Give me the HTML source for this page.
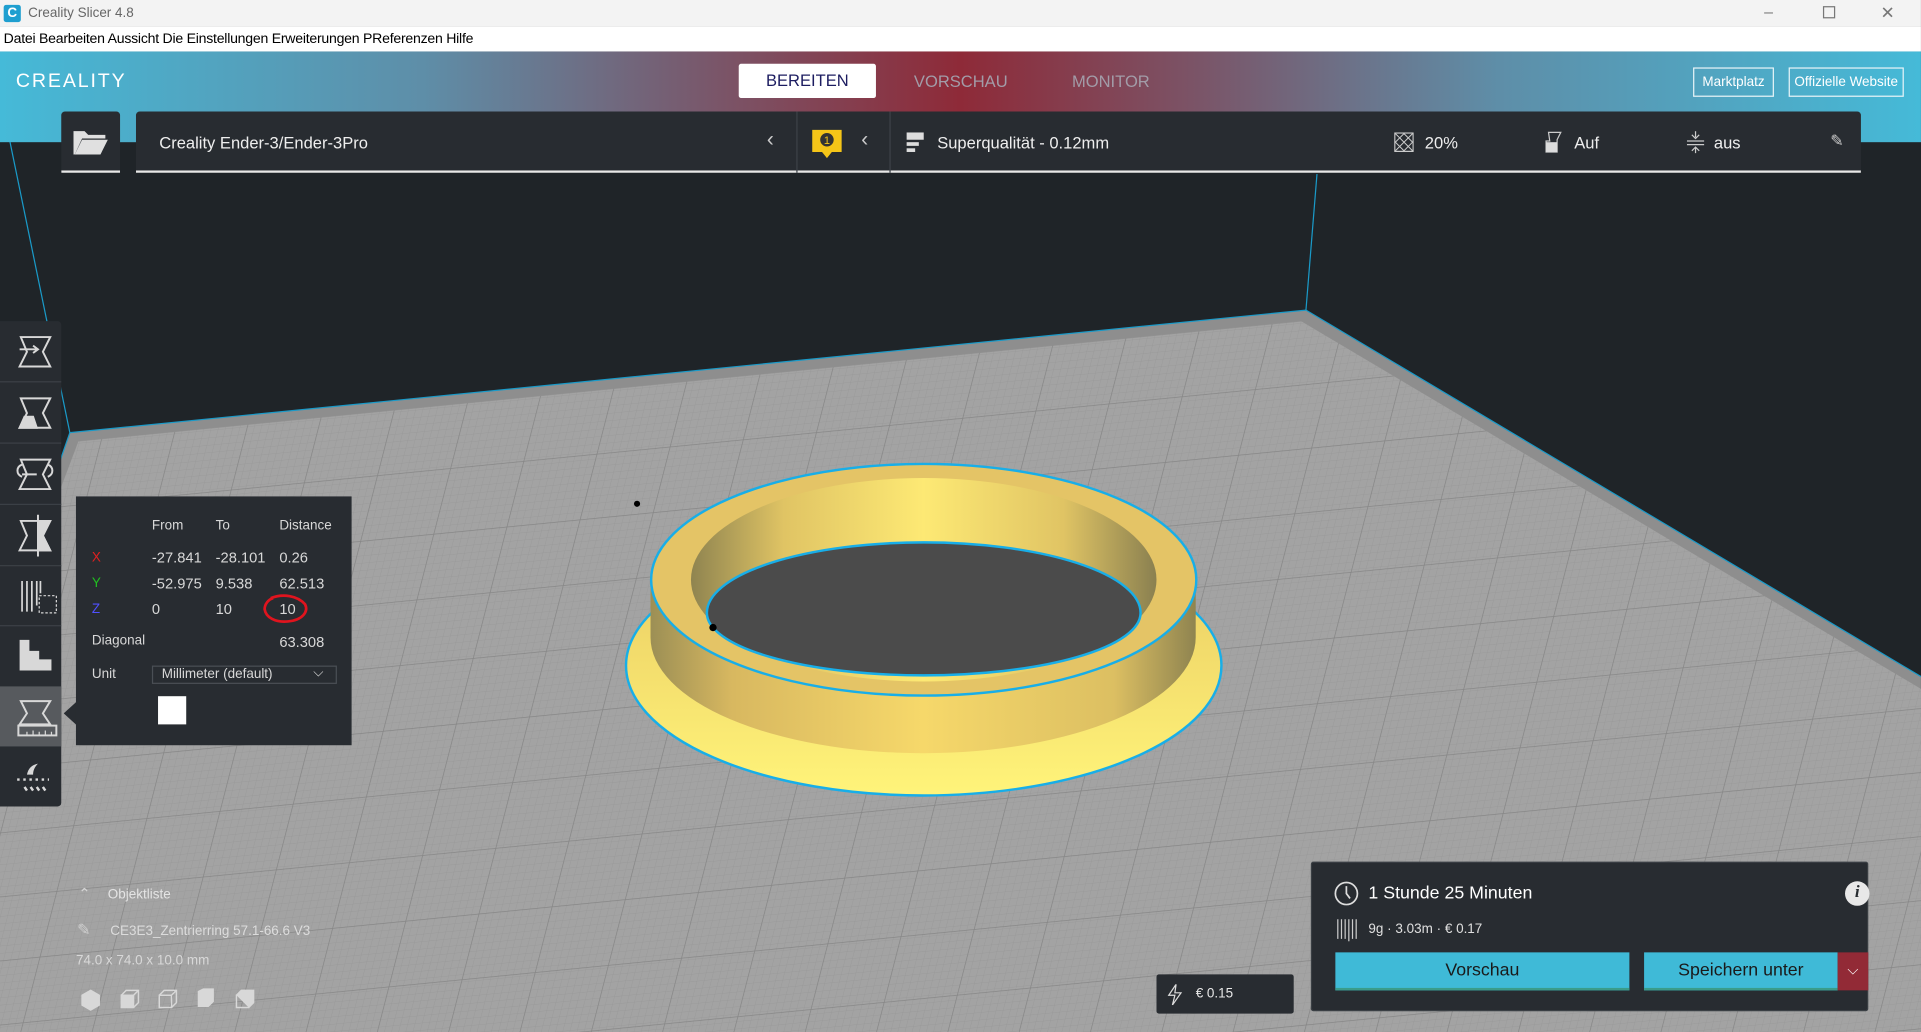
<!DOCTYPE html>
<html><head><meta charset="utf-8"><style>
*{margin:0;padding:0;box-sizing:border-box}
html,body{width:1921px;height:1032px;overflow:hidden;background:#1f2428;font-family:"Liberation Sans",sans-serif}
#stage{position:absolute;left:0;top:0;width:1568px;height:842px;transform-origin:0 0;transform:scale(1.2251,1.2257);background:#1f2428;overflow:hidden}
.abs{position:absolute}
.tb{background:#282c31}
.w{color:#fff}
</style></head><body><div id="stage">

<svg class="abs" style="left:0;top:0" width="1568" height="842" viewBox="0 0 1568 842">
<defs>
<pattern id="minor" width="6" height="6" patternUnits="userSpaceOnUse" patternTransform="rotate(-5.6) skewX(-20)">
<rect width="6" height="6" fill="#a3a3a3"/><path d="M0 0H6M0 0V6" stroke="#979797" stroke-width="0.6"/>
</pattern>
<pattern id="major" width="60" height="52" patternUnits="userSpaceOnUse" patternTransform="rotate(-5.6) skewX(-20)">
<path d="M0 0H60M0 0V52" stroke="#868686" stroke-width="1.2"/>
</pattern>
<linearGradient id="wall" x1="0" x2="1"><stop offset="0" stop-color="#9c8f55"/><stop offset="0.15" stop-color="#d8b860"/><stop offset="0.5" stop-color="#f6d86a"/><stop offset="0.85" stop-color="#dcbf62"/><stop offset="1" stop-color="#8f8450"/></linearGradient>
<linearGradient id="inwall" x1="0" x2="1"><stop offset="0" stop-color="#8f8450"/><stop offset="0.2" stop-color="#e0c464"/><stop offset="0.5" stop-color="#fde974"/><stop offset="0.8" stop-color="#e0c464"/><stop offset="1" stop-color="#8a8050"/></linearGradient>
<linearGradient id="flange" x1="0" x2="0" y1="0" y2="1"><stop offset="0" stop-color="#e8c860"/><stop offset="1" stop-color="#fff47a"/></linearGradient>
</defs>
<polygon points="57,353 1066,253 1568,552 1568,842 0,842 0,517" fill="#8e8e8e"/>
<polygon points="64,360 1062,262 1568,562 1568,842 0,842 0,530" fill="url(#minor)"/>
<polygon points="64,360 1062,262 1568,562 1568,842 0,842 0,530" fill="url(#major)"/>
<path d="M57,353 L1066,253 L1568,552" fill="none" stroke="#1a9ac8" stroke-width="1"/>
<path d="M57,353 L0,517" stroke="#1a9ac8" stroke-width="1"/>
<path d="M57,353 L8,115" stroke="#1a9ac8" stroke-width="1"/>
<path d="M1066,253 L1075,142" stroke="#1a9ac8" stroke-width="1"/>
<ellipse cx="754" cy="543" rx="243" ry="106" fill="url(#flange)" stroke="#18aee8" stroke-width="2"/>
<path d="M531,473 L531,520 A222.5 94.5 0 0 0 976,520 L976,473 Z" fill="url(#wall)"/>
<ellipse cx="754" cy="473" rx="222.5" ry="94.5" fill="#e4c466" stroke="#18aee8" stroke-width="2"/>
<ellipse cx="754" cy="473" rx="190" ry="83" fill="url(#inwall)"/>
<path d="M577,500 A177 57.5 0 0 1 931,500 A177 51 0 0 1 577,500 Z" fill="#4b4b4b" stroke="#18aee8" stroke-width="2"/>
<circle cx="520" cy="411" r="2.5" fill="#000"/><circle cx="582" cy="512" r="3" fill="#000"/>
</svg>

<div class="abs" style="left:0;top:0;width:1568px;height:22px;background:#f3f3f3"></div>
<div class="abs" style="left:3px;top:4px;width:14px;height:14px;background:#1f9fd0;border-radius:2px;color:#fff;font-size:11px;font-weight:bold;line-height:14px;text-align:center">C</div>
<div class="abs" style="left:23px;top:5px;font-size:11px;color:#666">Creality Slicer 4.8</div>
<div class="abs" style="left:1440px;top:2px;font-size:13px;color:#777">–</div>
<div class="abs" style="left:1488px;top:5px;width:10px;height:10px;border:1px solid #777"></div>
<div class="abs" style="left:1535px;top:2px;font-size:14px;color:#777">✕</div>
<div class="abs" style="left:0;top:22px;width:1568px;height:20px;background:#fff"></div>
<div class="abs" style="left:3px;top:26px;font-size:11.5px;color:#000;letter-spacing:-0.2px">Datei Bearbeiten Aussicht Die Einstellungen Erweiterungen PReferenzen Hilfe</div>
<div class="abs" style="left:0;top:42px;width:1568px;height:74px;background:linear-gradient(90deg,#45bad8 0%,#5e8ea8 22%,#7b5366 38%,#8e2a38 50%,#7b5366 62%,#5e8ea8 78%,#45bad8 100%)"></div>
<div class="abs w" style="left:13px;top:58px;font-size:16px;letter-spacing:1.5px">CREALITY</div>
<div class="abs" style="left:603px;top:52px;width:112px;height:28px;background:#fff;border-radius:2px;color:#1c1c60;font-size:13.5px;text-align:center;line-height:28px">BEREITEN</div>
<div class="abs" style="left:746px;top:59px;font-size:13.5px;color:#a29ca8">VORSCHAU</div>
<div class="abs" style="left:875px;top:59px;font-size:13.5px;color:#a29ca8">MONITOR</div>
<div class="abs w" style="left:1382px;top:55px;width:66px;height:24px;border:1px solid #e8f4f8;font-size:11px;text-align:center;line-height:22px">Marktplatz</div>
<div class="abs w" style="left:1460px;top:55px;width:94px;height:24px;border:1px solid #e8f4f8;font-size:11px;text-align:center;line-height:22px">Offizielle Website</div>
<div class="abs tb" style="left:50px;top:91px;width:48px;height:50px;border-bottom:2px solid #e8e8e8;border-radius:3px 3px 0 0"></div>
<svg class="abs" style="left:59px;top:104px" width="30" height="24"><path d="M1 3h9l3 3h14v3H8L2 22H1z" fill="#e0e0e0"/><path d="M8 10h21l-6 12H2z" fill="#e0e0e0"/></svg>
<div class="abs tb" style="left:111px;top:91px;width:1408px;height:50px;border-bottom:2px solid #e8e8e8;border-radius:3px 3px 0 0"></div>
<div class="abs" style="left:650px;top:91px;width:1px;height:50px;background:#3d4248"></div>
<div class="abs" style="left:726px;top:91px;width:1px;height:50px;background:#3d4248"></div>
<div class="abs w" style="left:130px;top:109px;font-size:13.5px;color:#eee">Creality Ender-3/Ender-3Pro</div>
<div class="abs" style="left:626px;top:104px;font-size:17px;color:#ccc">‹</div>
<svg class="abs" style="left:662px;top:104px" width="26" height="26"><path d="M1 2h24v18H17l-4 5-4-5H1z" fill="#f5c518"/><circle cx="13" cy="10" r="5.5" fill="#333"/><text x="13" y="13.5" font-size="9" fill="#f5c518" text-anchor="middle" font-family="Liberation Sans">1</text></svg>
<div class="abs" style="left:703px;top:104px;font-size:17px;color:#ccc">‹</div>
<svg class="abs" style="left:740px;top:108px" width="16" height="18"><rect x="0" y="0" width="14" height="6" fill="#ddd"/><rect x="0" y="8" width="10" height="3" fill="#ddd"/><rect x="0" y="13" width="7" height="3" fill="#ddd"/></svg>
<div class="abs" style="left:765px;top:109px;font-size:13.5px;color:#eee">Superqualität - 0.12mm</div>
<svg class="abs" style="left:1138px;top:108px" width="16" height="16"><rect x="0.5" y="0.5" width="15" height="15" fill="none" stroke="#ccc"/><path d="M1 1L15 15M15 1L1 15M8 1L1 8L8 15L15 8z" stroke="#ccc" fill="none" stroke-width="0.8"/></svg>
<div class="abs" style="left:1163px;top:109px;font-size:13.5px;color:#eee">20%</div>
<svg class="abs" style="left:1261px;top:107px" width="16" height="18"><path d="M3 1h10l-3 6v10H1V8h3z" fill="none" stroke="#ccc"/><rect x="1" y="9" width="9" height="8" fill="#ddd"/></svg>
<div class="abs" style="left:1285px;top:109px;font-size:13.5px;color:#eee">Auf</div>
<svg class="abs" style="left:1376px;top:107px" width="16" height="18"><path d="M8 0v5M5 3l3 3 3-3M1 8h14M1 11h14M8 18v-5M5 16l3-3 3 3" stroke="#ccc" fill="none"/></svg>
<div class="abs" style="left:1399px;top:109px;font-size:13.5px;color:#eee">aus</div>
<div class="abs" style="left:1494px;top:107px;font-size:13px;color:#ccc">✎</div>

<div class="abs tb" style="left:0;top:262px;width:50px;height:396px;border-radius:0 3px 3px 0"></div>
<div class="abs" style="left:0;top:560px;width:50px;height:49px;background:#575a5e"></div>
<div class="abs" style="left:0;top:311px;width:50px;height:1px;background:#3c4046"></div>
<div class="abs" style="left:0;top:361px;width:50px;height:1px;background:#3c4046"></div>
<div class="abs" style="left:0;top:411px;width:50px;height:1px;background:#3c4046"></div>
<div class="abs" style="left:0;top:461px;width:50px;height:1px;background:#3c4046"></div>
<div class="abs" style="left:0;top:510px;width:50px;height:1px;background:#3c4046"></div>
<svg class="abs" style="left:0;top:262px" width="50" height="396" fill="none" stroke="#d8d8d8" stroke-width="1.6">
<path d="M17 13h24l-6 12 6 12H16l6-12z"/><path d="M16 23h14M27 20l4 3-4 3"/>
<path d="M17 63h24l-6 12 6 12H16l6-12z"/><path d="M16 87l4-9h7l3 9z" fill="#d8d8d8"/>
<path d="M17 113h24l-6 12 6 12H16l6-12z"/><path d="M18 117c-5 2-5 8 0 10M39 117c5 2 5 8 0 10M18 125h12"/>
<path d="M17 163h24l-6 12 6 12H16l6-12z"/><path d="M31 158v34M31 163h10l-6 12 6 12H31z" fill="#d8d8d8"/>
<path d="M18 212v25M22 212v25M26 212v25M30 212v20M33 212v10" stroke-width="1.4"/><rect x="32" y="224" width="14" height="14" stroke-dasharray="2 1.5" stroke-width="1"/>
<path d="M16 260h8v9h8v7h10v9H16z" fill="#d8d8d8" stroke="none"/>
<path d="M17 310h24l-6 10 6 9H16l6-9z"/><rect x="15" y="330" width="31" height="8"/><path d="M22 338v-3M27 338v-4M32 338v-3M37 338v-4M42 338v-3" stroke-width="1"/>
<path d="M22 370c1-5 4-8 9-9-3 3-4 6-4 9z" fill="#d8d8d8" stroke="none"/><path d="M14 374h26" stroke-dasharray="2 3" stroke-width="2"/><path d="M20 380l2 3M25 380l2 3M30 380l2 3M35 380l2 3" stroke-width="2"/>
</svg>
<svg class="abs" style="left:52px;top:572px" width="11" height="20"><path d="M11 0L0 10l11 10z" fill="#282c31"/></svg>
<div class="abs tb" style="left:62px;top:405px;width:225px;height:203px;font-size:11px;color:#d8d8d8">
<div class="abs" style="left:62px;top:18px">From</div><div class="abs" style="left:114px;top:18px">To</div><div class="abs" style="left:166px;top:18px">Distance</div>
<div class="abs" style="left:13px;top:44px;color:#e02020">X</div><div class="abs" style="left:62px;top:43px;font-size:12px">-27.841</div><div class="abs" style="left:114px;top:43px;font-size:12px">-28.101</div><div class="abs" style="left:166px;top:43px;font-size:12px">0.26</div>
<div class="abs" style="left:13px;top:65px;color:#20c020">Y</div><div class="abs" style="left:62px;top:64px;font-size:12px">-52.975</div><div class="abs" style="left:114px;top:64px;font-size:12px">9.538</div><div class="abs" style="left:166px;top:64px;font-size:12px">62.513</div>
<div class="abs" style="left:13px;top:86px;color:#5050ff">Z</div><div class="abs" style="left:62px;top:85px;font-size:12px">0</div><div class="abs" style="left:114px;top:85px;font-size:12px">10</div><div class="abs" style="left:166px;top:85px;font-size:12px">10</div>
<div class="abs" style="left:13px;top:112px">Diagonal</div><div class="abs" style="left:166px;top:112px;font-size:12px">63.308</div>
<div class="abs" style="left:13px;top:139px">Unit</div>
<div class="abs" style="left:62px;top:138px;width:151px;height:15px;border:1px solid #4a4f55;padding-left:7px;line-height:13px">Millimeter (default)<span style="position:absolute;right:10px;top:-1px">⌵</span></div>
<div class="abs" style="left:67px;top:163px;width:23px;height:23px;background:#fff"></div>
</div>
<svg class="abs" style="left:213px;top:484px" width="40" height="30"><path d="M8 4c10-4 22-2 28 5 3 6-2 13-14 14-10 1-18-3-19-10 0-4 3-8 7-9" fill="none" stroke="#e0141e" stroke-width="2.2"/></svg>

<div class="abs" style="left:64px;top:722px;font-size:12px;color:#d5d5d5">⌃</div>
<div class="abs" style="left:88px;top:724px;font-size:11px;color:#e4e4e4">Objektliste</div>
<div class="abs" style="left:63px;top:751px;font-size:13px;color:#d0d0d0">✎</div>
<div class="abs" style="left:90px;top:754px;font-size:11px;color:#dcdcdc">CE3E3_Zentrierring 57.1-66.6 V3</div>
<div class="abs" style="left:62px;top:778px;font-size:11px;color:#d8d8d8">74.0 x 74.0 x 10.0 mm</div>
<svg class="abs" style="left:64px;top:806px" width="150" height="22" fill="none" stroke="#d8d8d8" stroke-width="1.2">
<path d="M3 6l7-4 7 4v8l-7 4-7-4z" fill="#d8d8d8"/>
<rect x="35" y="6" width="10" height="10" fill="#d8d8d8"/><path d="M35 6l4-4h10v10l-4 4M45 6l4-4"/>
<rect x="66" y="6" width="10" height="10"/><path d="M66 6l4-4h10v10l-4 4M76 6l4-4"/>
<path d="M98 3l4-2h8v10l-4 4h-8z" fill="#d8d8d8"/><path d="M102 5h8"/>
<rect x="129" y="6" width="10" height="10"/><path d="M129 6l4-4h10v10l-4 4" fill="#d8d8d8"/>
</svg>

<div class="abs tb" style="left:944px;top:795px;width:112px;height:32px;border-radius:2px"></div>
<svg class="abs" style="left:953px;top:803px" width="12" height="17"><path d="M7 0L1 9h5l-2 8 7-10H6z" fill="none" stroke="#ddd"/></svg>
<div class="abs" style="left:976px;top:805px;font-size:11px;color:#e8e8e8">€ 0.15</div>

<div class="abs tb" style="left:1070px;top:703px;width:455px;height:122px;border:1px solid #3a3f44;border-radius:2px"></div>
<svg class="abs" style="left:1089px;top:719px" width="20" height="20"><circle cx="10" cy="10" r="9" fill="none" stroke="#ddd" stroke-width="1.4"/><path d="M10 4v6l3 4" fill="none" stroke="#ddd" stroke-width="1.4"/></svg>
<div class="abs" style="left:1117px;top:721px;font-size:14.5px;color:#fff">1 Stunde 25 Minuten</div>
<div class="abs" style="left:1506px;top:719px;width:20px;height:20px;border-radius:50%;background:#e8e8e8;color:#282c31;font:bold italic 14px 'Liberation Serif',serif;text-align:center;line-height:20px">i</div>
<svg class="abs" style="left:1091px;top:749px" width="18" height="19" stroke="#ccc" stroke-width="1"><path d="M1 1v16M4 1v16M7 1v16M10 1v18M13 1v16M16 1v16"/></svg>
<div class="abs" style="left:1117px;top:752px;font-size:11px;color:#e0e0e0">9g · 3.03m · € 0.17</div>
<div class="abs" style="left:1090px;top:777px;width:240px;height:31px;background:#3fbad7;border-bottom:2px solid #3a9c8a;color:#1a1a1a;font-size:14.5px;text-align:center;line-height:31px">Vorschau</div>
<div class="abs" style="left:1342px;top:777px;width:158px;height:31px;background:#3fbad7;border-bottom:2px solid #3a9c8a;color:#1a1a1a;font-size:14.5px;text-align:center;line-height:31px">Speichern unter</div>
<div class="abs" style="left:1500px;top:777px;width:25px;height:31px;background:#922a36;color:#fff;font-size:12px;text-align:center;line-height:29px">⌵</div>
</div></body></html>
